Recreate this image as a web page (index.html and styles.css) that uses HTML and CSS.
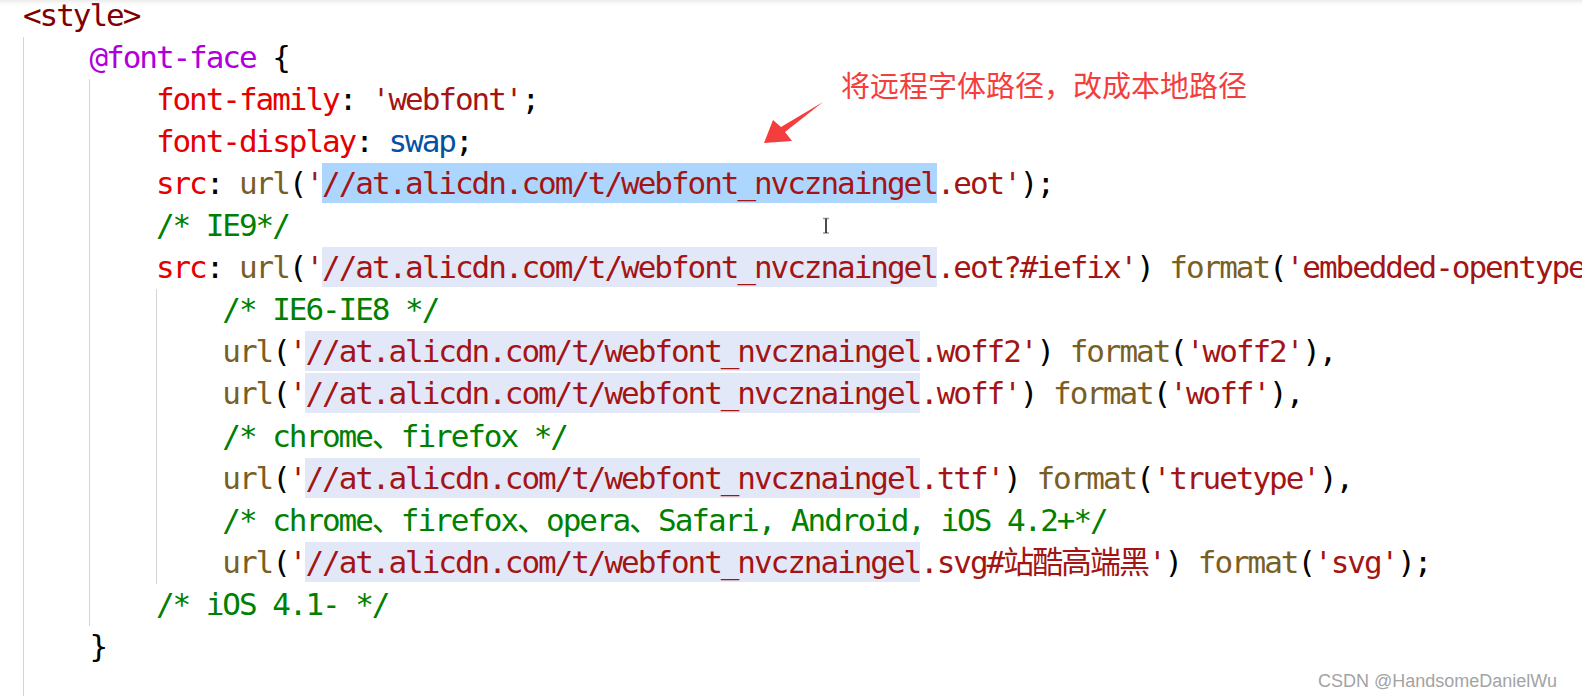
FILE: index.html
```html
<!DOCTYPE html>
<html lang="zh-CN">
<head>
  <meta charset="UTF-8">
  <meta name="viewport" content="width=device-width, initial-scale=1.0">
  <title>webfont 本地路径</title>
  <link rel="stylesheet" href="styles.css">
</head>
<body>

  <div class="editor">
    <div class="line"><span class="code"><span class="tag">&lt;style&gt;</span></span></div>
    <div class="line"><span class="ind"></span><span class="code"><span class="at">@font-face</span> {</span></div>
    <div class="line"><span class="ind"></span><span class="ind"></span><span class="code"><span class="prop">font-family</span>: <span class="str">'webfont'</span>;</span></div>
    <div class="line"><span class="ind"></span><span class="ind"></span><span class="code"><span class="prop">font-display</span>: <span class="val">swap</span>;</span></div>
    <div class="line"><span class="ind"></span><span class="ind"></span><span class="code"><span class="prop">src</span>: <span class="fn">url</span>(<span class="str">'</span><span class="str sel">//at.alicdn.com/t/webfont_nvcznaingel</span><span class="str">.eot'</span>);</span></div>
    <div class="line"><span class="ind"></span><span class="ind"></span><span class="code"><span class="cm">/* IE9*/</span></span></div>
    <div class="line"><span class="ind"></span><span class="ind"></span><span class="code"><span class="prop">src</span>: <span class="fn">url</span>(<span class="str">'</span><span class="str hl">//at.alicdn.com/t/webfont_nvcznaingel</span><span class="str">.eot?#iefix'</span>) <span class="fn">format</span>(<span class="str">'embedded-opentype'</span>),</span></div>
    <div class="line"><span class="ind"></span><span class="ind"></span><span class="ind"></span><span class="code"><span class="cm">/* IE6-IE8 */</span></span></div>
    <div class="line"><span class="ind"></span><span class="ind"></span><span class="ind"></span><span class="code"><span class="fn">url</span>(<span class="str">'</span><span class="str hl">//at.alicdn.com/t/webfont_nvcznaingel</span><span class="str">.woff2'</span>) <span class="fn">format</span>(<span class="str">'woff2'</span>),</span></div>
    <div class="line"><span class="ind"></span><span class="ind"></span><span class="ind"></span><span class="code"><span class="fn">url</span>(<span class="str">'</span><span class="str hl">//at.alicdn.com/t/webfont_nvcznaingel</span><span class="str">.woff'</span>) <span class="fn">format</span>(<span class="str">'woff'</span>),</span></div>
    <div class="line"><span class="ind"></span><span class="ind"></span><span class="ind"></span><span class="code"><span class="cm">/* chrome、firefox */</span></span></div>
    <div class="line"><span class="ind"></span><span class="ind"></span><span class="ind"></span><span class="code"><span class="fn">url</span>(<span class="str">'</span><span class="str hl">//at.alicdn.com/t/webfont_nvcznaingel</span><span class="str">.ttf'</span>) <span class="fn">format</span>(<span class="str">'truetype'</span>),</span></div>
    <div class="line"><span class="ind"></span><span class="ind"></span><span class="ind"></span><span class="code"><span class="cm">/* chrome、firefox、opera、Safari, Android, iOS 4.2+*/</span></span></div>
    <div class="line"><span class="ind"></span><span class="ind"></span><span class="ind"></span><span class="code"><span class="fn">url</span>(<span class="str">'</span><span class="str hl">//at.alicdn.com/t/webfont_nvcznaingel</span><span class="str">.svg#站酷高端黑'</span>) <span class="fn">format</span>(<span class="str">'svg'</span>);</span></div>
    <div class="line"><span class="ind"></span><span class="ind"></span><span class="code"><span class="cm">/* iOS 4.1- */</span></span></div>
    <div class="line"><span class="ind"></span><span class="code">}</span></div>
    <div class="line"><span class="ind"></span></div>
  </div>

  <div class="scroll-shadow"></div>

  <div class="note">将远程字体路径，改成本地路径</div>
  <svg class="note-arrow" width="66" height="50" viewBox="0 0 66 50">
    <polygon points="4,45 13,22 21,29 63,4 25,34 32,43" fill="#f43e3e"/>
  </svg>

  <svg class="ibeam" width="10" height="19" viewBox="0 0 10 19">
    <path d="M2 2.5h6M2 17h6" stroke="#9a9a9a" stroke-width="1.5"/>
    <path d="M5 2.5v14.5" stroke="#111" stroke-width="1.5"/>
  </svg>

  <div class="watermark">CSDN @HandsomeDanielWu</div>

</body>
</html>
```

FILE: styles.css
```css
body {
  margin: 0;
  padding: 0;
  background: #fff;
  height: 696px;
  overflow: hidden;
  position: relative;
}

.editor {
  --cw: 16.61px;
  margin-top: -5.4px;
  padding-left: 23px;
  font-family: "DejaVu Sans Mono", "Noto Sans CJK SC", monospace;
  font-size: 31px;
  letter-spacing: -2.05px;
  color: #000;
}

.line {
  display: flex;
  align-items: flex-start;
  height: 42.1px;
  line-height: 40px;
  white-space: pre;
}

.ind {
  flex: none;
  align-self: stretch;
  width: calc(var(--cw) * 4);
  border-left: 1px solid #d4d4d4;
  box-sizing: border-box;
}

.code {
  flex: none;
}

/* token colours */
.tag { color: #800000; }
.at { color: #af00db; }
.prop { color: #e50000; }
.str { color: #a31515; }
.val { color: #0451a5; }
.fn { color: #795e26; }
.cm { color: #008000; }

.sel,
.hl {
  display: inline-block;
  line-height: 40px;
}

.sel {
  background: #add6ff;
}

.hl {
  background: #e3e8f8;
}

.scroll-shadow {
  position: absolute;
  top: 0;
  left: 0;
  right: 0;
  height: 8px;
  box-shadow: inset 0 6px 6px -6px #d6d6d6;
}

.note {
  position: absolute;
  left: 841px;
  top: 63px;
  font-family: "Noto Sans CJK SC", sans-serif;
  font-size: 29px;
  line-height: 42px;
  color: #f43e3e;
  white-space: nowrap;
}

.note-arrow {
  position: absolute;
  left: 760px;
  top: 98px;
}

.ibeam {
  position: absolute;
  left: 821px;
  top: 216px;
}

.watermark {
  position: absolute;
  right: 25px;
  bottom: 4px;
  font-family: "Liberation Sans", Arial, sans-serif;
  font-size: 18px;
  line-height: 21px;
  color: #a3a3a3;
}
```
